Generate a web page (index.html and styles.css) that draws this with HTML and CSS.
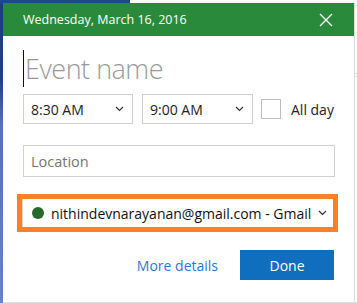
FILE: index.html
```html
<!DOCTYPE html>
<html>
<head>
<meta charset="utf-8">
<link rel="stylesheet" href="styles.css">
</head>
<body>
<div class="top"><div class="top-blue"></div></div>
<div class="main">
  <div class="leftbar"></div>
  <div class="dialog">
    <div class="header">
      <span class="title">Wednesday, March 16, 2016</span>
      <svg class="close" width="14" height="14" viewBox="0 0 14 14"><path d="M1 1L13 13M13 1L1 13" stroke="#fff" stroke-width="1.4" fill="none"/></svg>
    </div>
    <div class="body">
      <div class="event"><span class="caret"></span><span class="ph">Event name</span></div>
      <div class="times">
        <div class="select s1"><span>8:30 AM</span><svg class="chev" width="9" height="6" viewBox="0 0 9 6"><path d="M1 1L4.5 4.5L8 1" stroke="#333" stroke-width="1.2" fill="none"/></svg></div>
        <div class="select s2"><span>9:00 AM</span><svg class="chev" width="9" height="6" viewBox="0 0 9 6"><path d="M1 1L4.5 4.5L8 1" stroke="#333" stroke-width="1.2" fill="none"/></svg></div>
        <div class="check"></div>
        <span class="allday">All day</span>
      </div>
      <div class="location">Location</div>
      <div class="account-wrap">
        <div class="account">
          <span class="dot"></span>
          <span class="email">nithindevnarayanan@gmail.com - Gmail</span>
          <svg class="chev" width="9" height="6" viewBox="0 0 9 6"><path d="M1 1L4.5 4.5L8 1" stroke="#333" stroke-width="1.2" fill="none"/></svg>
        </div>
      </div>
      <div class="actions">
        <span class="more">More details</span>
        <span class="done">Done</span>
      </div>
    </div>
  </div>
  <div class="rightside">
    <div class="panel p1"></div>
    <div class="panel p2"></div>
  </div>
</div>
</body>
</html>
```
FILE: styles.css
```css
* { box-sizing: border-box; }
html, body { margin: 0; padding: 0; }
body {
  width: 357px;
  height: 303px;
  overflow: hidden;
  background: #fff;
  font-family: "Open Sans", "Noto Sans", sans-serif;
  color: #222;
}
.top { height: 3px; background: #fff; }
.top-blue { width: 130px; height: 3px; background: #1c4a86; }
.main { display: flex; height: 300px; }
.leftbar {
  width: 3px;
  background: linear-gradient(#1c3f78 0%, #1e3f80 25%, #5a6fb5 40%, #6a82c4 100%);
}
.dialog {
  width: 351px;
  background: #fff;
  display: flex;
  flex-direction: column;
  border-bottom: 1px solid #e2e2e2;
}
.header {
  height: 33px;
  background: #2a8a3b;
  display: flex;
  align-items: center;
  justify-content: space-between;
  padding: 0 21px 0 20px;
}
.title { color: #fff; font-size: 12.5px; }
.close { display: block; }
.body { padding: 0 20px 0 20px; position: relative; }
.event { display: flex; align-items: center; height: 46px; margin-top: 9px; }
.caret { width: 1px; height: 37px; background: #111; }
.ph { font-size: 27px; font-weight: 300; color: #9a9a9a; margin-left: 1px; letter-spacing: -0.5px; }
.times { display: flex; align-items: center; margin-top: 3px; }
.select {
  height: 30px;
  border: 1px solid #cfcfcf;
  display: flex;
  align-items: center;
  justify-content: space-between;
  padding: 0 8px 0 7px;
  font-size: 14px;
  color: #222;
}
.s1 { width: 110px; }
.s2 { width: 111px; margin-left: 9px; }
.check { width: 20px; height: 20px; border: 1px solid #bdbdbd; margin-left: 8px; }
.allday { font-size: 14px; margin-left: 10px; color: #222; }
.location {
  margin-top: 21px;
  height: 32px;
  width: 312px;
  border: 1px solid #d0d0d0;
  display: flex;
  align-items: center;
  padding-left: 7px;
  font-size: 14.5px;
  color: #757575;
}
.account-wrap {
  margin: 17px 0 0 -6px;
  width: 321px;
  height: 38px;
  border: 5px solid #fb8129;
  background: #fff;
}
.account {
  height: 100%;
  border-left: 1px solid #d8d8d8;
  display: flex;
  align-items: center;
  padding: 0 6px 0 9px;
}
.dot { width: 12px; height: 12px; border-radius: 50%; background: #236a2b; flex: none; }
.email { font-size: 14px; color: #111; margin-left: 7px; flex: 1; white-space: nowrap; }
.actions { display: flex; justify-content: flex-end; align-items: center; margin-top: 18px; }
.more { color: #2b7bd0; font-size: 14px; margin-right: 22px; }
.done {
  width: 94px;
  height: 30px;
  background: #106ebe;
  color: #fff;
  font-size: 14px;
  display: flex;
  align-items: center;
  justify-content: center;
}
.rightside { flex: 1; border-left: 1px solid #dcdcdc; display: flex; flex-direction: column; padding-top: 2px; }
.panel { border-top: 1px solid #e0e0e0; border-bottom: 1px solid #e0e0e0; }
.p1 { height: 70px; }
.p2 { height: 230px; margin-top: 2px; }
```
